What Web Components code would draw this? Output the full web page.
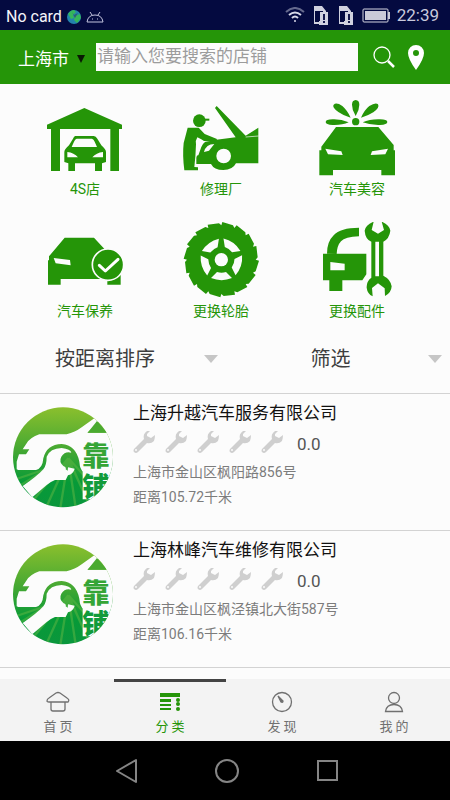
<!DOCTYPE html>
<html lang="zh-CN">
<head>
<meta charset="utf-8">
<meta name="viewport" content="width=device-width, initial-scale=1">
<title>分类</title>
<style>
html{height:100%}
body{margin:0;min-height:100%;background:#fcfcfc;font-family:Roboto,"Noto Sans CJK SC",sans-serif;--green:#259508}
</style>
</head>
<body>
<app-shell>
  <status-bar slot="top"></status-bar>
  <search-header slot="top" city="上海市"></search-header>
  <category-grid>
    <category-tile icon="garage">4S店</category-tile>
    <category-tile icon="repair">修理厂</category-tile>
    <category-tile icon="beauty">汽车美容</category-tile>
    <category-tile icon="upkeep">汽车保养</category-tile>
    <category-tile icon="tyre">更换轮胎</category-tile>
    <category-tile icon="parts">更换配件</category-tile>
  </category-grid>
  <filter-bar></filter-bar>
  <shop-card score="0.0"><span slot="name">上海升越汽车服务有限公司</span><span slot="address">上海市金山区枫阳路856号</span><span slot="distance">距离105.72千米</span></shop-card>
  <shop-card score="0.0"><span slot="name">上海林峰汽车维修有限公司</span><span slot="address">上海市金山区枫泾镇北大街587号</span><span slot="distance">距离106.16千米</span></shop-card>
  <tab-bar slot="bottom">
    <tab-item icon="home">首 页</tab-item>
    <tab-item icon="classify" active>分 类</tab-item>
    <tab-item icon="discover">发 现</tab-item>
    <tab-item icon="mine">我 的</tab-item>
  </tab-bar>
  <system-nav slot="bottom"></system-nav>
</app-shell>
<script>
const reset = `*{box-sizing:border-box}button{border:0;margin:0;padding:0;background:none;font:inherit;color:inherit;cursor:pointer}svg{display:block;flex:none}`;

function define(name, css, html) {
  customElements.define(name, class extends HTMLElement {
    constructor() {
      super();
      this.attachShadow({ mode: 'open' });
    }
    connectedCallback() {
      const markup = typeof html === 'function' ? html(this) : html;
      this.shadowRoot.innerHTML = `<style>${reset}${css}</style>${markup}`;
    }
  });
}

const categoryIcons = {
  garage: ['45 15 240 240', `<path d="M51 89 163 39l113 50v13h-9v126h-26V102H90v126H63V102H51z"/>
    <path fill-rule="evenodd" d="M136 123h55q7 0 11 8l12 20q14 12 14 20v30l-12 4v23h-21v-23h-60v23h-20v-23l-12-4v-30q0-8 14-20l12-20q3-8 7-8zM140 131q-5 2-8 9l-7 16h76l-7-16q-3-7-8-9zM112 171v16h32q-12-14-32-16zM219 171v16h-32q12-14 32-16z"/>`],
  repair: ['33 15 240 240', `<circle cx="88" cy="77" r="19"/><path d="M96 71h22v6H96z"/>
    <path d="M53 98h33q10 10 18 19l37 15-3 8-36-2q-15-9-20-11-6 9-4 21-1 36-5 68l11 1v9H43q-6-46-2-82z"/>
    <path fill-rule="evenodd" d="M79 207v-19q1-8 6-7l9-25q3-9 11-15l34-7 58-7-62-88 5-6 87 89 38-24v107h-67q-10 20-38 20t-37-18zM102 171l15-4 16-20q-25 0-31 24zM161 161a22 22 0 1 0 0 44 22 22 0 0 0 0-44z"/><path d="m227 126 39-3" stroke="#fcfcfc" stroke-width="2"/>`],
  beauty: ['36 30 240 240', `<circle cx="152" cy="95" r="11"/>
    <path d="M152 78q-11-17-11-34 0-13 11-14 11 1 11 14 0 17-11 34zM137 83q-20-5-37-17-20-15-14-22 8-8 26 4 15 13 25 35zM168 83q20-5 37-16 20-14 14-24-7-7-26 5-15 12-25 35zM131 97q-20 9-48 8-21-1-21-9t21-8q25-1 48 9zM173 97q25 9 52 8 22-1 22-9t-22-8q-30-1-52 9z"/>
    <path fill-rule="evenodd" d="M93 111h127l46 54v16h4v75h-41v-16H84v16H43v-75h6v-11zM61 176l8 17 44 2-4-11zM249 176l-8 17-44 2 4-11z"/>`],
  upkeep: ['45 21 240 240', `<path fill-rule="evenodd" d="M104 68h88l37 40 43 60v41h-40v-17H92v17H54v-73h3v-12zM71 129l6 16 45 6-2-16z"/>
    <circle cx="234" cy="149" r="47" stroke="#fcfcfc" stroke-width="5"/><path d="m208 151 18 17 38-35" fill="none" stroke="#fff" stroke-width="9" stroke-linecap="round" stroke-linejoin="round"/>`],
  tyre: ['33 21 240 240', ''],
  parts: ['36 21 240 240', `<path d="M66 116q0-36 20-55 20-23 76-23v26q-42 1-54 15-12 13-13 38z"/>
    <path fill-rule="evenodd" d="M54 116h130v62l-12 18h-60v32H73v-32H54zM76 141v25h43v-20z"/>
    <path fill-rule="evenodd" d="M206 20q-24 9-27 27 2 26 20 33v108q-15 11-14 30 2 18 18 26l-2-25 18-14 20 15 1 23q19-9 20-29-3-21-25-32V80q18-9 21-33-3-18-26-27l7 25-18 11-19-11zM211 80h11v104h-11z"/>`]
};

/* Tyre: saw-toothed tread, hub and five spoke openings */
(() => {
  let tread = '';
  for (let i = 0; i < 16; i++) {
    for (const [offset, r] of [[0, 103], [0.025, 113], [0.33, 109]]) {
      const a = i * Math.PI / 8 + offset;
      tread += `${tread ? 'L' : 'M'}${Math.round(154 + r * Math.cos(a))} ${Math.round(134 + r * Math.sin(a))}`;
    }
  }
  let gaps = '';
  for (let i = 0; i < 5; i++) {
    gaps += `<path transform="rotate(${i * 72} 154 134)" fill="#fcfcfc" d="M141 171q14 4 27 0l18 18q-31 13-63 0z"/>`;
  }
  categoryIcons.tyre[1] = `<path d="${tread}z"/>${gaps}<circle cx="154" cy="134" r="20" fill="#fcfcfc"/>`;
})();

const tabIcons = {
  home: `<path d="M2 10q0-2 2-3l7-5q2-1 4 0l7 5q3 2 1 4H4q-2 0-2-1zM6 11v7q0 2 2 2h10q2 0 2-2v-7" fill="none" stroke="currentColor"/>`,
  classify: `<path fill="currentColor" d="M3 2h20v4H3zM3 8h11v3H3zM3 13h11v2H3zM3 17h11v2H3z"/><g fill="currentColor"><circle cx="21" cy="9" r="2"/><circle cx="21" cy="13" r="2"/><circle cx="21" cy="18" r="2"/></g>`,
  discover: `<circle cx="13" cy="11" r="9.5" fill="none" stroke="currentColor"/><path d="m9 5 5 5q0 2-2 1z" fill="currentColor" stroke="currentColor"/>`,
  mine: `<g fill="none" stroke="currentColor"><circle cx="13" cy="7" r="5.5"/><path d="M4.500 20.500q1-7 8.500-7t8.500 7z"/></g>`
};

define('app-shell', `:host{display:flex;flex-direction:column;min-height:100vh}main{flex:1}`,
  `<slot name="top"></slot><main><slot></slot></main><slot name="bottom"></slot>`);

define('status-bar', `
  :host{display:flex;align-items:center;height:30px;padding:0 11px 0 6px;background:#040a40;color:#f4f4fa;font-size:16px;line-height:20px}
  .left,.right{display:flex;align-items:center}.left{gap:5px;flex:1;padding-top:3px}.right{gap:7px;color:#c9c9dc}time{font-size:17px}`,
  `<div class="left"><span>No card</span>
    <svg width="14" height="14" viewBox="0 0 14 14"><circle cx="7" cy="7" r="7" fill="#2383ac"/><path d="M1 4q3-4 6-4l2 2-3 3 1 3-3 1zM8 6l5-2 1 4-4 5-3-3z" fill="#35b65b"/><path d="m5 2 2 3 4-2-3 5z" fill="#2d6075"/></svg>
    <svg width="18" height="12" viewBox="0 0 18 12" fill="none" stroke="#c4c5df"><path d="M1 11q1-7 8-7t8 7zM4 1l2 3M14 1l-2 3"/><path d="M6 8h1M11 8h1"/></svg></div>
  <div class="right">
    <svg width="20" height="16" viewBox="0 0 20 16" fill="none" stroke="#d8d9e8" stroke-width="2"><path d="M1 5q9-8 18 0" stroke="#65698d"/><path d="M4 8q6-5 12 0M7 11q3-3 6 0"/><circle cx="10" cy="14" r="1" fill="#d8d9e8" stroke="none"/></svg>
    ${'<svg width="18" height="20" viewBox="0 0 18 20"><path d="M2 1h8l4 5v3h-3V6H3v11h4v2H2z" fill="#d0d1df"/><path d="M8 7h8v13H7v-4h1z" fill="#d0d1df"/><path d="M12 9v6M12 16v2" stroke="#15194c" stroke-width="2"/></svg>'.repeat(2)}
    <svg width="28" height="15" viewBox="0 0 28 15"><rect x="1" y="1" width="25" height="13" rx="1" fill="none" stroke="#d5d5e1"/><path d="M3 3h21v9H3z" fill="#cacad8"/><path d="M26 4h2v7h-2z" fill="#cacad8"/></svg>
    <time>22:39</time></div>`);

define('search-header', `
  :host{display:block;background:var(--green);color:#fff}
  form{display:flex;align-items:center;height:54px;padding:0 26px 0 18px}
  .city{display:flex;align-items:center;gap:8px;font-size:17px;line-height:24px;width:78px;padding-top:3px;white-space:nowrap}
  input{flex:1;min-width:0;height:28px;border:0;border-radius:0;padding:0 1px 2px;background:#fcfcfc;color:#333;font:17px/24px Roboto,"Noto Sans CJK SC",sans-serif;outline-offset:0}
  input::placeholder{color:#9c9c9c;opacity:1}
  .find{margin-left:15px}.pin{margin-left:13px}`,
  el => `<form role="search" onsubmit="return false">
    <button type="button" class="city"><span>${el.getAttribute('city')}</span><svg width="8" height="8" viewBox="0 0 8 8"><path d="M0 0h8L4 8z" fill="#0a1a04"/></svg></button>
    <input type="text" aria-label="搜索店铺" placeholder="请输入您要搜索的店铺">
    <button class="find" aria-label="搜索"><svg width="22" height="22" viewBox="0 0 22 22" fill="none" stroke="#fff"><circle cx="9" cy="9" r="8" stroke-width="1.300"/><path d="m15 15 6 6" stroke-width="2.500"/></svg></button>
    <button type="button" class="pin" aria-label="定位"><svg width="16" height="25" viewBox="0 0 16 25"><path fill="#fff" fill-rule="evenodd" d="M8 0a8 8 0 0 1 8 8q0 6-8 17Q0 14 0 8a8 8 0 0 1 8-8zM8 5a3 3 0 1 0 0 6 3 3 0 0 0 0-6z"/></svg></button>
  </form>`);

define('category-grid', `:host{display:grid;grid-template-columns:repeat(3,1fr);row-gap:24px;padding:16px 25px 0 17px}`, `<slot></slot>`);

define('category-tile', `:host{display:flex;justify-content:center;color:var(--green)}
  button{display:flex;flex-direction:column;align-items:center;font-size:14px;line-height:18px;white-space:nowrap}`,
  el => {
    const [box, shapes] = categoryIcons[el.getAttribute('icon')];
    return `<button><svg width="80" height="80" viewBox="${box}" fill="currentColor" aria-hidden="true">${shapes}</svg><span><slot></slot></span></button>`;
  });

define('filter-bar', `:host{display:flex;justify-content:space-between;align-items:center;height:69px;padding:4px 8px 0 55px;color:#3e3e3e}
  button{display:flex;align-items:center;justify-content:space-between;font-size:20px;line-height:28px;white-space:nowrap}
  .sort{width:42%}.pick{width:34%}`,
  ['sort', 'pick'].map(kind => `<button class="${kind}"><span>${kind === 'sort' ? '按距离排序' : '筛选'}</span><svg width="14" height="8" viewBox="0 0 14 8"><path d="M0 0h14L7 8z" fill="#c6c6c6"/></svg></button>`).join(''));

define('shop-logo', `:host{display:block}text{font-family:"Liberation Sans","Noto Sans CJK SC",sans-serif;font-weight:900}`,
  `<svg width="102" height="102" viewBox="36 48 306 306" role="img" aria-label="靠铺">
    <defs><linearGradient id="g" x1="0" y1="0" x2="0" y2="1"><stop stop-color="#8dc02d"/><stop offset=".45" stop-color="#41a733"/><stop offset=".75" stop-color="#079a38"/><stop offset="1" stop-color="#0b963d"/></linearGradient>
    <clipPath id="c"><circle cx="189" cy="202" r="150"/></clipPath></defs>
    <g clip-path="url(#c)"><path fill="url(#g)" d="M36 48h306v306H36z"/>
      <g stroke="#62b844" stroke-width="7" opacity=".5"><path d="M205 205 100 330M205 205 135 360M205 205 180 360M205 205 228 360M205 205 270 350M205 205 310 320M40 270 130 240M52 292 120 250"/></g>
      <path fill="#fcfcfc" d="M50 238v-23l7-22h21l10-15H68l12-18q10-17 38-27h82q25-6 45-21l38-27 13 10-34 33h83v117h-95q-10-5-12-30-10-50-53-53-45 1-55 43-2 30-22 35H55z"/>
      <path fill="#fcfcfc" d="M68 288q42-28 62-50 10-13 10-38 10-25 45-26 27 4 29 14-19-5-30 12-8 15 6 28 10 4 7 10l6 4 1-10 20 4q-4 16-20 20l-7 14h-32q-13 5-25 15l-43 37z"/>
      <path fill="#fcfcfc" d="M248 240h98v88h-98z"/>
      <path d="m291 93 30 35h-58z" fill="#4aaa30"/></g>
    <text x="247" y="228" font-size="82" fill="#35a536">靠</text>
    <g clip-path="url(#c)"><text x="247" y="322" font-size="82" fill="#119b3a">铺</text></g>
  </svg>`);

define('wrench-rating', `:host{display:flex;align-items:center;height:36px;color:#555;font-size:17px;line-height:20px}
  .set{display:flex;gap:10px;width:164px}.value{padding-top:4px}`,
  el => `<span class="set" aria-hidden="true">${'<svg width="22" height="22" viewBox="0 0 22 22"><path fill="#cfcfcf" fill-rule="evenodd" d="M17 0q-3-1-5 2-2 2-1 6L1 18q-1 2 0 3 2 2 4 0l9-9q4 1 7-2 1-3 1-6l-4 3-4-2V3zM3 18a1 1 0 1 0 0 2 1 1 0 0 0 0-2z"/></svg>'.repeat(5)}</span><span class="value">${el.getAttribute('value')}</span>`);

define('shop-card', `:host{display:block;border-top:1px solid #d3d3d3;color:#7c7c7c;font-size:14px;line-height:25px}
  :host(:last-of-type){border-bottom:1px solid #d3d3d3}
  article{display:flex;gap:19px;padding:8px 8px 20px 12px}
  shop-logo{padding-top:4px}.body{flex:1;min-width:0}
  h2{margin:0;color:#111;font-size:17px;line-height:22px;font-weight:400}p{margin:0}`,
  el => `<article><shop-logo></shop-logo><div class="body"><h2><slot name="name"></slot></h2><wrench-rating value="${el.getAttribute('score')}"></wrench-rating><p><slot name="address"></slot></p><p><slot name="distance"></slot></p></div></article>`);

define('tab-bar', `:host{display:block;background:#f3f3f3}nav{display:grid;grid-template-columns:repeat(4,1fr);padding-left:2px}`, `<nav><slot></slot></nav>`);

define('tab-item', `:host{display:block;border-top:3px solid transparent;color:#707070}
  :host([active]){color:var(--green);border-top-color:#444}
  button{display:flex;flex-direction:column;align-items:center;gap:5px;width:100%;padding:9px 0 5px;font-size:13px;line-height:18px}`,
  el => `<button><svg width="26" height="22" viewBox="0 0 26 22" stroke-width="1.300" aria-hidden="true">${tabIcons[el.getAttribute('icon')]}</svg><span><slot></slot></span></button>`);

define('system-nav', `:host{display:block;background:#000;color:#858585}
  nav{display:flex;justify-content:center;align-items:center;gap:76px;height:59px;padding-left:4px}`,
  `<nav><button aria-label="返回"><svg width="24" height="26" viewBox="0 0 24 26"><path d="M21 2v22L2 13z" fill="none" stroke="currentColor" stroke-width="2" stroke-linejoin="round"/></svg></button>
  <button aria-label="主屏幕"><svg width="24" height="24" viewBox="0 0 24 24"><circle cx="12" cy="12" r="11" fill="none" stroke="currentColor" stroke-width="2"/></svg></button>
  <button aria-label="最近任务"><svg width="24" height="24" viewBox="0 0 24 24"><rect x="3" y="2" width="19" height="19" fill="none" stroke="currentColor" stroke-width="2"/></svg></button></nav>`);
</script>
</body>
</html>
